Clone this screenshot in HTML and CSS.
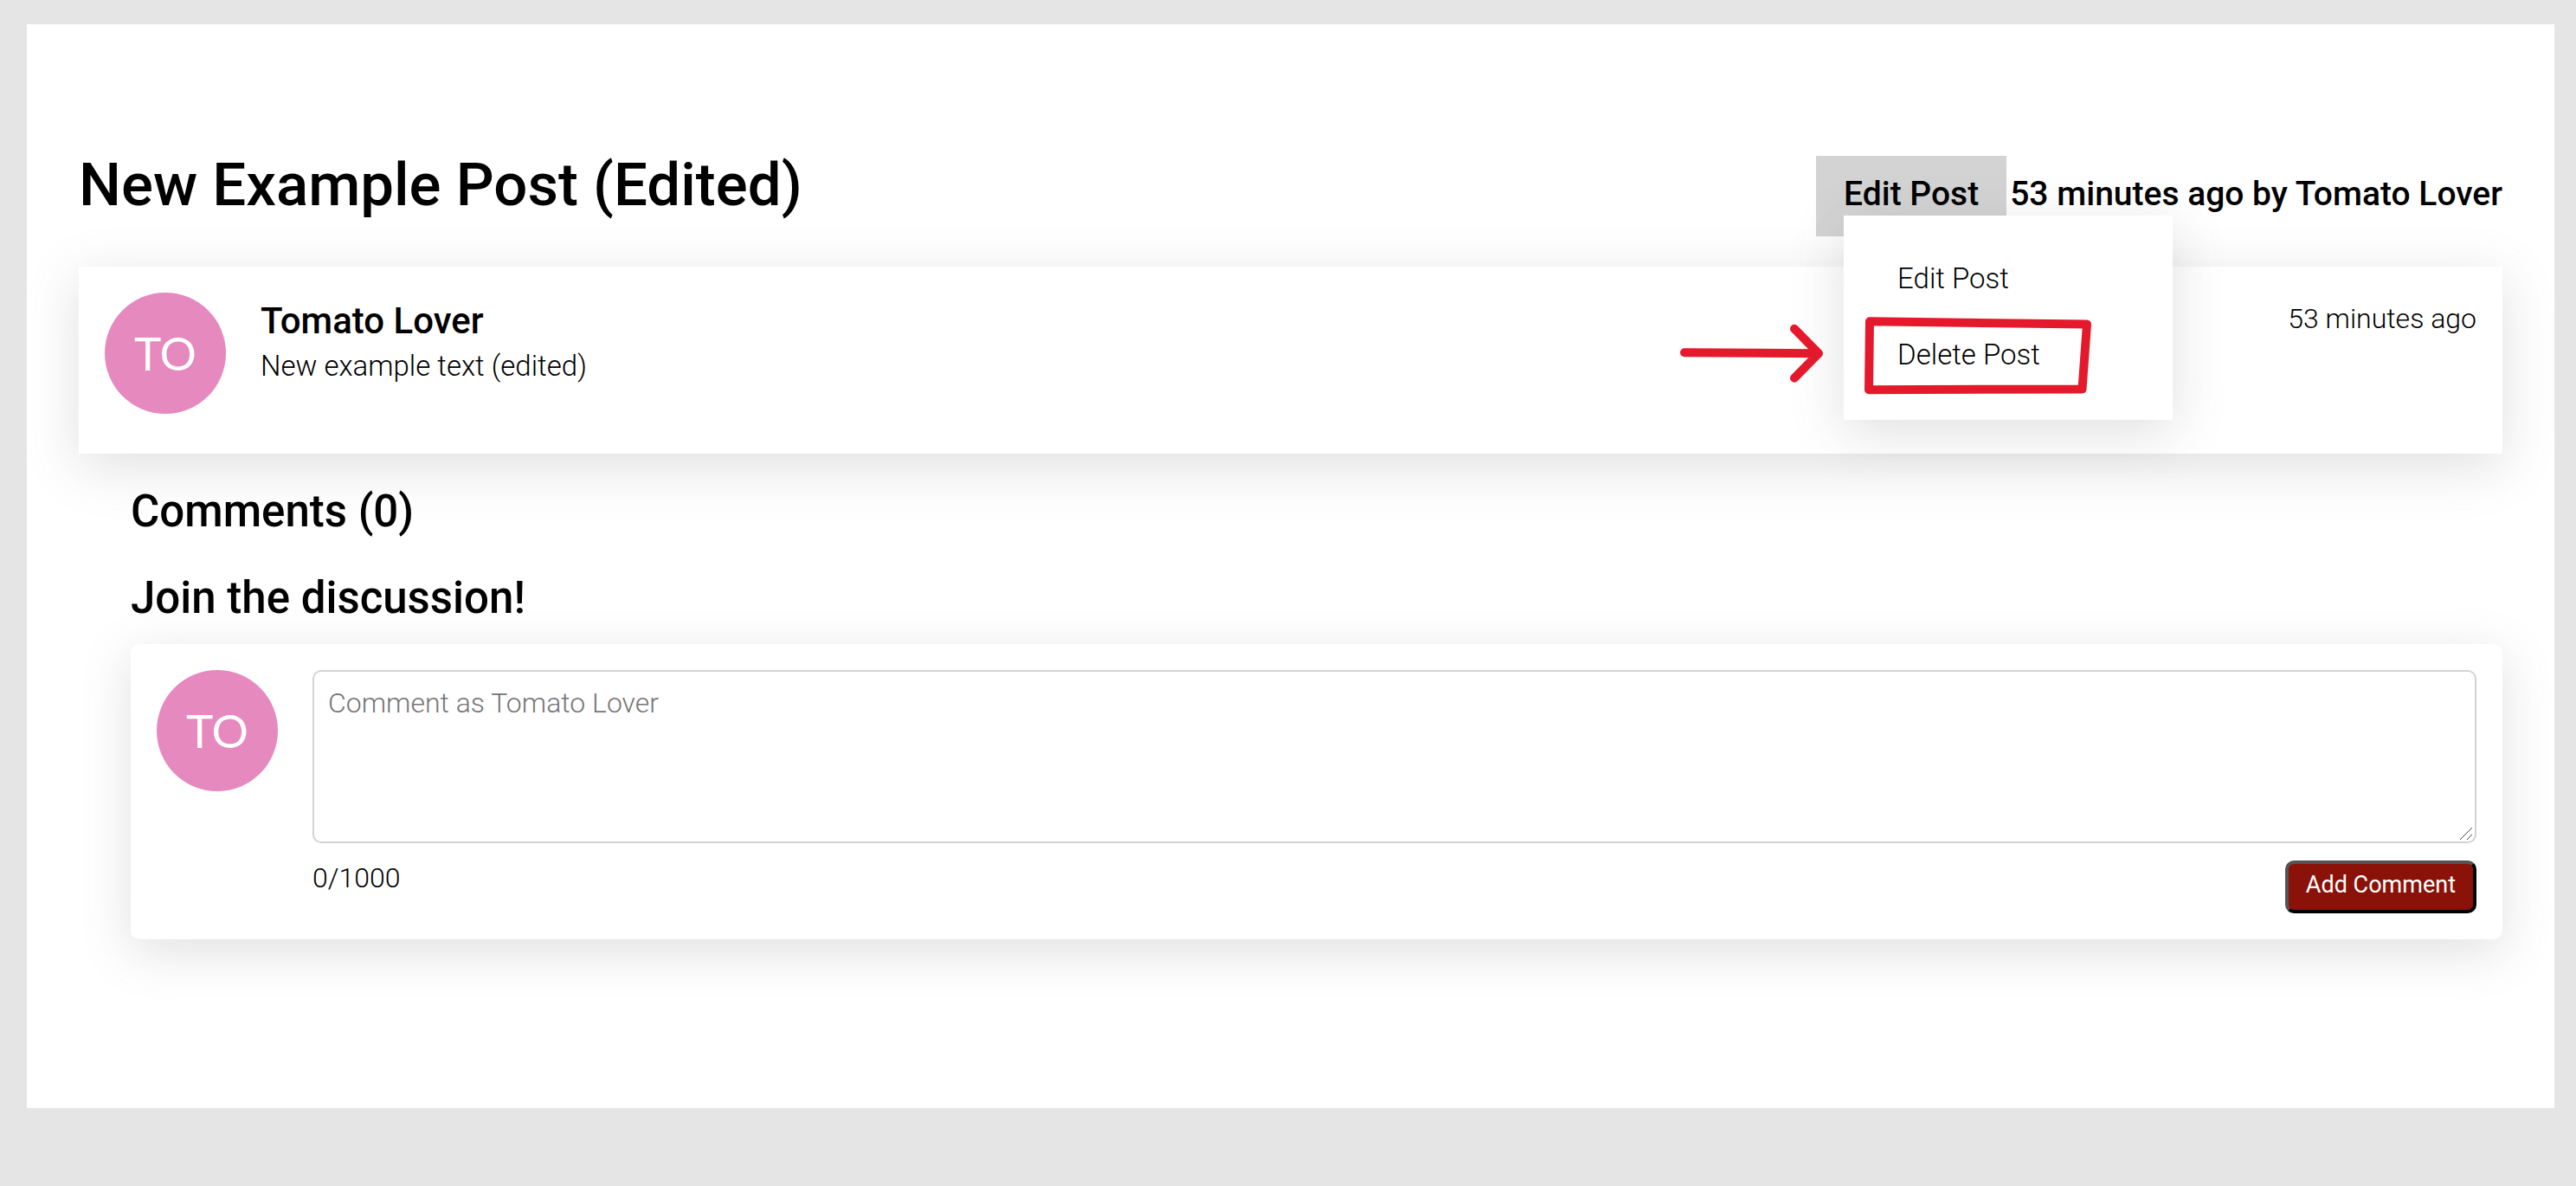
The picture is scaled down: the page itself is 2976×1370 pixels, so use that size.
FILE: index.html
```html
<!DOCTYPE html>
<html lang="en">
<head>
  <meta charset="utf-8">
  <meta name="viewport" content="width=device-width, initial-scale=1">
  <title>New Example Post (Edited)</title>
  <link rel="stylesheet" href="styles.css">
</head>
<body>
  <main class="panel">
    <header class="post-header">
      <h1 class="post-title">New Example Post (Edited)</h1>
      <div class="post-meta">
        <div class="menu">
          <button class="menu-toggle" type="button" aria-expanded="true" aria-haspopup="true">Edit Post</button>
          <ul class="menu-list">
            <li><a class="menu-link" href="#edit">Edit Post</a></li>
            <li><a class="menu-link" href="#delete">Delete Post</a></li>
          </ul>
          <svg class="annotation" viewBox="1935 364 484 94" aria-hidden="true">
            <path d="M1945 407.3 L2099 408.3 M2072 379.8 L2100 408.3 L2072 436.7"/>
            <path d="M2159 371.3 L2410 374.6 L2404.5 449.5 L2158 450.2 Z"/>
          </svg>
        </div>
        <p class="byline">53 minutes ago by Tomato Lover</p>
      </div>
    </header>

    <article class="post-card">
      <div class="avatar">TO</div>
      <div class="post-body">
        <h2 class="author">Tomato Lover</h2>
        <p class="post-text">New example text (edited)</p>
      </div>
      <time class="post-time">53 minutes ago</time>
    </article>

    <section class="comments">
      <h2 class="section-title">Comments (0)</h2>
      <h2 class="section-title section-title-join">Join the discussion!</h2>
      <form class="comment-form">
        <div class="avatar">TO</div>
        <div class="comment-main">
          <div class="comment-field">
            <textarea class="comment-input" aria-label="Comment" maxlength="1000" placeholder="Comment as Tomato Lover"></textarea>
            <svg class="grip" viewBox="0 0 16 16" aria-hidden="true"><path d="M1 15 L15 1 M9 15 L15 9"/></svg>
          </div>
          <div class="comment-footer">
            <span class="counter">0/1000</span>
            <button class="submit" type="button">Add Comment</button>
          </div>
        </div>
      </form>
    </section>
  </main>
</body>
</html>
```
FILE: styles.css
```css
* {
  box-sizing: border-box;
}

body {
  margin: 0;
  padding: 28px 25px 90px 31px;
  background: #e5e5e5;
  color: #000;
  font-family: Roboto, "Liberation Sans", sans-serif;
  font-size: 33px;
  font-weight: 300;
  line-height: 40px;
}

h1, h2, p, ul {
  margin: 0;
  padding: 0;
  font-weight: inherit;
}

.panel {
  padding: 152px 60px 195px;
  background: #fff;
}

.post-header {
  display: flex;
  align-items: baseline;
  justify-content: space-between;
}

.post-title {
  font-size: 69px;
  font-weight: 500;
  line-height: 64px;
}

.post-meta {
  display: flex;
  align-items: baseline;
  gap: 4px;
}

.menu {
  position: relative;
}

.menu-toggle {
  display: block;
  padding: 22px 32px 26px;
  border: 0;
  background: #d3d3d3;
  color: inherit;
  font: 500 39px/45px Roboto, "Liberation Sans", sans-serif;
}

.byline {
  font-size: 39px;
  font-weight: 500;
  line-height: 45px;
}

.menu-list {
  position: absolute;
  top: 69px;
  left: 32px;
  z-index: 1;
  width: 380px;
  padding: 29px 0 31px;
  background: #fff;
  box-shadow: 0 14px 58px rgba(100, 100, 111, 0.2);
  list-style: none;
}

.menu-link {
  display: block;
  padding: 24px 62px;
  color: inherit;
  text-decoration: none;
}

/* Arrow and frame that point out the delete action */
.annotation {
  position: absolute;
  top: 184px;
  left: -162px;
  z-index: 2;
  width: 484px;
  height: 94px;
  fill: none;
  stroke: #e5192c;
  stroke-width: 10px;
  stroke-linecap: round;
  stroke-linejoin: round;
  pointer-events: none;
}

.post-card {
  display: flex;
  gap: 40px;
  margin-top: 35px;
  padding: 30px 30px 46px;
  background: #fff;
  box-shadow: 0 14px 58px rgba(100, 100, 111, 0.2);
}

.avatar {
  display: flex;
  flex: none;
  align-items: center;
  justify-content: center;
  width: 140px;
  height: 140px;
  border-radius: 50%;
  background: #e589bf;
  color: #fff;
  font-family: Lato, sans-serif;
  font-size: 53px;
  font-weight: 400;
}

.post-body {
  display: flex;
  flex: 1;
  flex-direction: column;
  gap: 7px;
  padding-top: 8px;
}

.author {
  font-size: 42px;
  font-weight: 500;
  line-height: 50px;
}

.post-time {
  padding-top: 10px;
  font-size: 32px;
}

.comments {
  padding: 37px 0 0 60px;
}

.section-title {
  font-size: 51px;
  font-weight: 500;
  line-height: 60px;
}

.section-title-join {
  margin: 40px 0 23px;
}

.comment-form {
  display: flex;
  gap: 40px;
  padding: 30px;
  border-radius: 10px;
  background: #fff;
  box-shadow: 0 14px 58px rgba(100, 100, 111, 0.2);
}

.comment-main {
  flex: 1;
  font-size: 32px;
}

.comment-field {
  position: relative;
}

.comment-input {
  display: block;
  width: 100%;
  height: 200px;
  padding: 16px;
  border: 2px solid #d3d3d3;
  border-radius: 10px;
  background: #fff;
  color: inherit;
  font: 300 32px/40px Roboto, "Liberation Sans", sans-serif;
  resize: vertical;
}

.comment-input::placeholder {
  color: #757575;
}

.comment-input::-webkit-resizer {
  background: transparent;
}

.grip {
  position: absolute;
  right: 4px;
  bottom: 3px;
  width: 16px;
  height: 16px;
  fill: none;
  stroke: #444;
  stroke-width: 1px;
  pointer-events: none;
}

.comment-footer {
  display: flex;
  align-items: flex-start;
  justify-content: space-between;
  margin-top: 20px;
}

.submit {
  padding: 8px 20px 13px;
  border: 4px outset #000;
  border-radius: 10px;
  background: #8b1208;
  color: #fff;
  font: 400 27px/32px Roboto, "Liberation Sans", sans-serif;
}
```
